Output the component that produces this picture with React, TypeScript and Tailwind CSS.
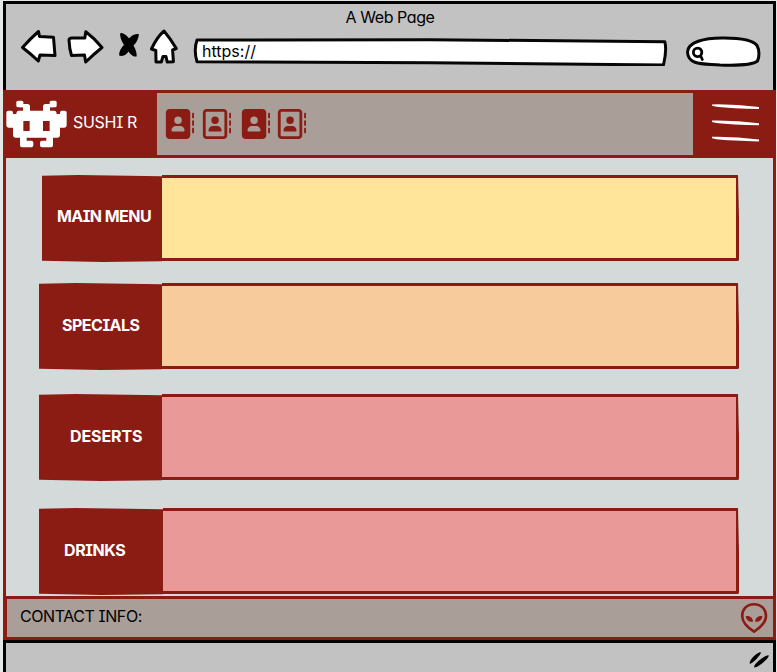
import type { ReactNode } from "react";
import { FaAddressBook, FaRegAddressBook } from "react-icons/fa6";

const ink = { stroke: "#060606", strokeWidth: 3, strokeLinejoin: "round", strokeLinecap: "round", fill: "#fff" } as const;

function BrowserBar() {
  return (
    <header className="h-[86px] bg-[#c2c2c2] text-black">
      <h1 className="h-[28px] pl-px pt-px text-center leading-[24px] tracking-[-0.42px]">A Web Page</h1>
      <div className="flex">
        <svg className="-mt-[4px] ml-[14px] h-[40px] w-[152px]" viewBox="20 28 152 40" overflow="visible">
          <g {...ink}>
            <path d="M22.5 47.5Q31 38 38.5 31.5L39.5 36.5L53.5 37.3L55 55.6L40 55L38.3 61Q31 54 22.5 47.5Z" />
            <path d="M69 40Q69 38 72 38L84.8 38L85.8 31.8Q94 38 102 47.5Q94 54 85.7 62L84.5 55L71.5 55.5Q69.4 49 69 40Z" />
            <path d="M164 31Q170 38 176.3 48.5L172.6 50L173.4 61.7L167.2 62L166 56.5L163 56.5L161.3 62L156 62L155.8 50.5L151.4 49Q157 37 164 31Z" />
          </g>
          <g fill="#000">
            <path d="M120.5 33C124 32.5 129 37 131.5 42.5C134.8 47 137 52 136.7 56.5C132 57.5 128.3 52 126.4 47.5C122.5 44 119 36 120.5 33Z" />
            <path d="M138.8 34C133 33.3 128.4 38 126.5 42.5C122 46 119 51 119.2 55.5C124 57.5 129 52.5 130.7 47.5C135.5 45 138.8 39 138.8 34Z" />
          </g>
        </svg>
        <div className="relative ml-[21px] mt-[6px] h-[28px] w-[475px]">
          <svg className="absolute inset-0 h-full w-full" viewBox="193 38 475 28">
            <path {...ink} d="M197 40L430 39.7L664.8 41.7Q667 50 663.5 65L430 62.7L197 61.7Q193.5 50 197 40Z" />
          </svg>
          <span className="relative block pl-[9px] leading-[26px]">https://</span>
        </div>
        <svg className="ml-[17px] mt-[3px] h-[34px] w-[80px]" viewBox="685 35 80 34">
          <path {...ink} d="M687.5 52C688 42 704 38 722 38C740 37.8 753 40 757 45.5C759.5 50 759.5 57 757.5 61C752 65.5 735 65.5 720 65C705 63.5 688 66 687.5 52Z" />
          <path {...ink} strokeWidth={2.8} d="M697.5 48.2A4.2 4.2 0 1 0 701.7 53.2C702.3 50 700 48 697.5 48.2ZM700.5 55.5L702.3 59.5" />
        </svg>
      </div>
    </header>
  );
}

function Invader() {
  return (
    <svg className="h-[48px] w-[61px]" viewBox="6 12 183 144">
      <g fill="#fff">
        <rect x="37" y="14" width="21" height="20" rx="5" />
        <rect x="137" y="14" width="21" height="20" rx="5" />
        <path d="M48 24H70Q78 24 78 32V44H117V32Q117 24 125 24H147V34H138V44H150Q158 44 158 54H168V50Q168 44 174 44H182Q188 44 188 50V88Q188 95 181 95H168V118Q168 125 161 125H34Q27 125 27 118V95H14Q7 95 7 88V50Q7 44 13 44H21Q27 44 27 50V54H37Q37 44 45 44H57V34H48Z" />
        <path d="M48 122H68V134H82Q88 134 88 140V148Q88 154 82 154H54Q48 154 48 148ZM147 122H127V134H114Q108 134 108 140V148Q108 154 114 154H141Q147 154 147 148Z" />
      </g>
      <path fill="#8b1c14" d="M58 75H77V105H58ZM117 75H137V105H117Z" />
    </svg>
  );
}

function NavBar() {
  return (
    <nav className="-ml-[3px] -mr-[3px] flex h-[68px] text-[#8b1c14]">
      <div className="flex w-[154px] rounded-tl-[3px] bg-[#8b1c14] pl-[3px] pt-[10px] text-white">
        <Invader />
        <span className="ml-[6px] mt-[10px] whitespace-nowrap leading-[24px] tracking-[-0.3px]">SUSHI R</span>
      </div>
      <div className="flex flex-1 border-y-[3px] border-[#8b1c14] bg-[#a99e98] pl-[7px] pt-[16px]">
        <FaAddressBook className="size-[30px]" />
        <FaRegAddressBook className="ml-[7px] size-[30px]" />
        <FaAddressBook className="ml-[9px] size-[30px]" />
        <FaRegAddressBook className="ml-[6px] size-[30px]" />
      </div>
      <div className="w-[83px] rounded-tr-[3px] bg-[#8b1c14] pl-[18px] pt-[13px]">
        <svg className="h-[40px] w-[50px]" viewBox="711 103 50 40" fill="#fff">
          {[0, 16.2, 32.4].map((y) => (
            <path key={y} transform={`translate(0 ${y})`} d="M712 104.4Q735 104 759 107V109Q746 108.7 735 108.2Q720 107.8 712 105.8Z" />
          ))}
        </svg>
      </div>
    </nav>
  );
}

function MenuRow({ box, label, fill, children }: { box: string; label: string; fill: string; children: ReactNode }) {
  return (
    <section className={`flex h-[87px] ${box}`}>
      <div className={`whitespace-nowrap bg-[#8b1c14] font-bold leading-[24px] text-white [clip-path:polygon(0_1%,30%_0,100%_1.5%,100%_99%,50%_100%,0_98.7%)] ${label}`}>
        {children}
      </div>
      <div className={`mb-[1px] flex-1 rounded-r-[2px] border-y-[3px] border-r-[3px] border-[#8b1c14] [clip-path:polygon(0_0,calc(100%-1px)_0,100%_50%,100%_100%,0_100%)] ${fill}`} />
    </section>
  );
}

function ContactBar() {
  return (
    <footer className="-ml-[3px] -mr-[3px] flex h-[44px] justify-between border-[3px] border-l-[4px] border-[#8b1c14] bg-[#a99e98] text-black">
      <span className="pl-[13px] pt-[5px] leading-[24px] tracking-[-0.42px]">CONTACT INFO:</span>
      <svg className="mr-[4px] mt-[3px] h-[32px] w-[29px]" viewBox="740 602 29 32">
        <path fill="none" stroke="#8b1c14" strokeWidth="2.6" strokeLinejoin="round" d="M754 604.3C746.5 604.3 742.2 609.5 742.2 616C742.2 622.5 749.5 628.7 754 631.6C758.5 628.7 766 622.5 766 616C766 609.5 761.5 604.3 754 604.3Z" />
        <path fill="#8b1c14" d="M745.8 616.2C750 615.5 753 618 753 621.7C749 622.2 746 619.8 745.8 616.2ZM762.4 616.2C758.2 615.5 755.2 618 755.2 621.7C759.2 622.2 762.2 619.8 762.4 616.2Z" />
      </svg>
    </footer>
  );
}

export default function App() {
  return (
    <div className="h-[672px] w-[777px] overflow-hidden bg-[#e3e7e6] pl-[3px] pr-px pt-[1px] text-[16px] [font-family:Inter,'Noto_Sans',sans-serif] [font-feature-settings:'cv11','cv08']">
      <div className="h-[671px] border-x-[3px] border-t-[3px] border-black bg-[#c2c2c2]">
        <BrowserBar />
        <main className="-ml-[3px] -mr-[3px] border-x-[3px] border-[#8b1c14] bg-[#d4dad9]">
          <NavBar />
          <div className="flex h-[438px] flex-col pt-[17px]">
            <MenuRow box="ml-[36px] mr-[34px]" label="w-[120px] pl-[15px] pt-[29px] tracking-[-0.55px]" fill="bg-[#ffe599]">MAIN MENU</MenuRow>
            <MenuRow box="ml-[33px] mr-[34px] mt-[21px]" label="w-[123px] pl-[23px] pt-[30px] tracking-[-0.5px]" fill="bg-[#f8cb9d]">SPECIALS</MenuRow>
            <MenuRow box="ml-[33px] mr-[34px] mt-[24px]" label="w-[123px] pl-[31px] pt-[30px] tracking-[-0.1px]" fill="bg-[#ea9999]">DESERTS</MenuRow>
            <MenuRow box="ml-[33px] mr-[34px] mt-[27px]" label="w-[124px] pl-[25px] pt-[30px] tracking-[-0.4px]" fill="bg-[#ea9999]">DRINKS</MenuRow>
          </div>
          <ContactBar />
        </main>
        <div className="flex h-[31px] justify-end border-t-[3px] border-black">
          <svg className="mr-[3px] mt-[8px] h-[18px] w-[22px]" viewBox="748 651 22 18">
            <path d="M750 664C748 661 757 652 760.5 652.2C763 653 753 663 750 664ZM754.5 667.5C752 665 765 655 768.5 655.2C770.5 657 758 668 754.5 667.5Z" />
          </svg>
        </div>
      </div>
    </div>
  );
}
